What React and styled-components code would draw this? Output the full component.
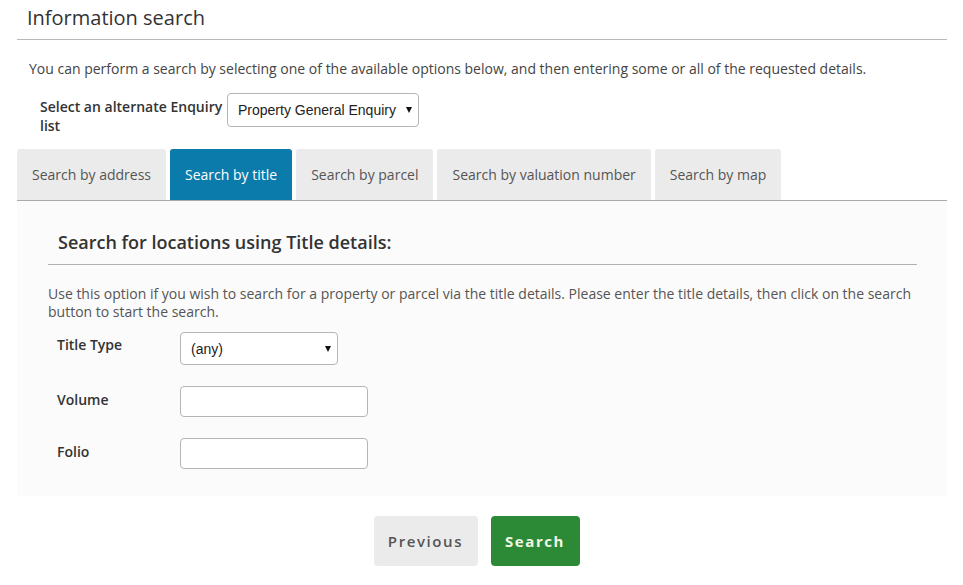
import React from "react";
import styled, { createGlobalStyle } from "styled-components";

const Global = createGlobalStyle`
  html, body { margin: 0; padding: 0; background: #fff; }
  body { font-family: "Open Sans", "Noto Sans", sans-serif; color: #444; }
  * { box-sizing: border-box; }
`;

const Page = styled.div`
  width: 930px;
  margin-left: 17px;
`;

const Title = styled.h1`
  margin: 0;
  height: 40px;
  padding: 5px 0 0 10px;
  font-size: 20px;
  font-weight: 400;
  line-height: 26px;
  color: #333;
  border-bottom: 1px solid #b8b8b8;
`;

const Intro = styled.p`
  margin: 19px 0 0 12px;
  font-size: 14px;
  line-height: 20px;
  color: #444;
`;

const EnquiryRow = styled.div`
  display: flex;
  align-items: flex-start;
  gap: 2px;
  margin: 14px 0 0 23px;
`;

const EnquiryLabel = styled.label`
  width: 185px;
  padding-top: 4px;
  font-size: 14px;
  font-weight: 600;
  line-height: 19px;
  color: #333;
`;

const SelectBox = styled.div`
  position: relative;
  display: flex;
  align-items: center;
  width: ${(p) => p.$w}px;
  height: ${(p) => p.$h}px;
  padding-left: 10px;
  border: 1px solid #b5b5b5;
  border-radius: 4px;
  background: #fff;
  font-family: "Liberation Sans", Arial, sans-serif;
  font-size: 14px;
  color: #222;
`;

const Caret = styled.span`
  position: absolute;
  right: 6px;
  top: 50%;
  transform: translateY(-50%);
  width: 0;
  height: 0;
  border-left: 3.5px solid transparent;
  border-right: 3.5px solid transparent;
  border-top: 6px solid #111;
`;

const Tabs = styled.div`
  display: flex;
  gap: 4px;
  margin-top: 14px;
  border-bottom: 1px solid #aaa;
`;

const Tab = styled.div`
  height: 51px;
  display: flex;
  align-items: center;
  padding: 0 15px;
  border-radius: 3px 3px 0 0;
  font-size: 14px;
  background: ${(p) => (p.$active ? "#0b7bab" : "#ebebeb")};
  color: ${(p) => (p.$active ? "#fff" : "#555")};
`;

const Panel = styled.div`
  background: #fbfbfb;
  padding: 26px 30px 27px 31px;
`;

const PanelHeading = styled.h2`
  margin: 0;
  padding: 0 0 7px 10px;
  font-size: 18px;
  font-weight: 600;
  line-height: 30px;
  color: #333;
  border-bottom: 1px solid #b0b0b0;
`;

const PanelText = styled.p`
  margin: 20px 0 0;
  font-size: 14px;
  line-height: 18px;
  color: #555;
`;

const Form = styled.div`
  display: flex;
  flex-direction: column;
  gap: 21px;
  margin-top: 11px;
`;

const FieldRow = styled.div`
  display: flex;
  align-items: flex-start;
`;

const FieldLabel = styled.label`
  width: 132px;
  padding-left: 9px;
  padding-top: ${(p) => p.$pt}px;
  font-size: 14px;
  font-weight: 600;
  line-height: 19px;
  color: #333;
`;

const TextInput = styled.input`
  width: 188px;
  height: 31px;
  border: 1px solid #b5b5b5;
  border-radius: 4px;
  background: #fff;
  outline: none;
`;

const Actions = styled.div`
  display: flex;
  justify-content: center;
  gap: 13px;
  margin-top: 20px;
  padding-right: 11px;
`;

const Button = styled.button`
  height: 50px;
  width: ${(p) => p.$w}px;
  border: none;
  border-radius: 4px;
  font-family: "Open Sans", sans-serif;
  font-size: 15px;
  font-weight: ${(p) => (p.$primary ? 700 : 600)};
  letter-spacing: 1.6px;
  background: ${(p) => (p.$primary ? "#2c8a37" : "#ebebeb")};
  color: ${(p) => (p.$primary ? "#eef8e6" : "#555")};
`;

const tabs = [
  { label: "Search by address" },
  { label: "Search by title", active: true },
  { label: "Search by parcel" },
  { label: "Search by valuation number" },
  { label: "Search by map" },
];

export default function App() {
  return (
    <>
      <Global />
      <Page>
        <Title>Information search</Title>
        <Intro>
          You can perform a search by selecting one of the available options below, and then entering some or all of the requested details.
        </Intro>
        <EnquiryRow>
          <EnquiryLabel>Select an alternate Enquiry list</EnquiryLabel>
          <SelectBox $w={192} $h={34}>
            Property General Enquiry
            <Caret />
          </SelectBox>
        </EnquiryRow>
        <Tabs>
          {tabs.map((t) => (
            <Tab key={t.label} $active={t.active}>
              {t.label}
            </Tab>
          ))}
        </Tabs>
        <Panel>
          <PanelHeading>Search for locations using Title details:</PanelHeading>
          <PanelText>
            Use this option if you wish to search for a property or parcel via the title details. Please enter the title details, then click on the search button to start the search.
          </PanelText>
          <Form>
            <FieldRow>
              <FieldLabel $pt={3}>Title Type</FieldLabel>
              <SelectBox $w={158} $h={33}>
                (any)
                <Caret />
              </SelectBox>
            </FieldRow>
            <FieldRow>
              <FieldLabel $pt={4}>Volume</FieldLabel>
              <TextInput />
            </FieldRow>
            <FieldRow>
              <FieldLabel $pt={4}>Folio</FieldLabel>
              <TextInput />
            </FieldRow>
          </Form>
        </Panel>
        <Actions>
          <Button $w={104}>Previous</Button>
          <Button $w={89} $primary>Search</Button>
        </Actions>
      </Page>
    </>
  );
}
